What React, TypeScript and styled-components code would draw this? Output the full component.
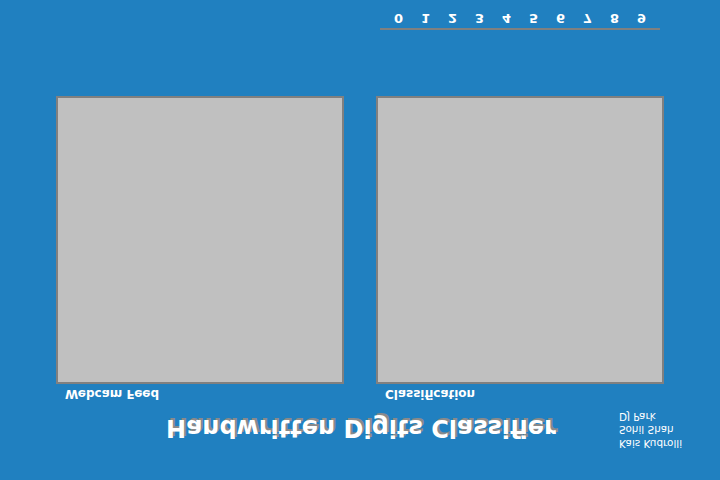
import React from "react";
import styled, { createGlobalStyle } from "styled-components";

const Global = createGlobalStyle`
  html, body { margin: 0; padding: 0; background: #2080c0; }
  body { font-family: "DejaVu Sans", sans-serif; }
`;

const Page = styled.div`
  width: 720px;
  height: 480px;
  background: #2080c0;
  color: #ffffff;
  display: flex;
  flex-direction: column;
  transform: scaleY(-1);
  overflow: hidden;
  font-family: "DejaVu Sans", sans-serif;
`;

const Header = styled.header`
  height: 79px;
  display: grid;
  grid-template-columns: 1fr auto 1fr;
  align-items: start;
`;

const Title = styled.h1`
  grid-column: 2;
  margin: 38px 0 0 2px;
  font-size: 24px;
  line-height: 28px;
  font-weight: bold;
  text-shadow: 2px 2px 0 #8a8a8a;
  white-space: nowrap;
`;

const Authors = styled.div`
  grid-column: 3;
  margin: 30px 0 0 63px;
  font-size: 10.4px;
  line-height: 13.5px;
  display: flex;
  flex-direction: column;
`;

const Panels = styled.div`
  display: flex;
  gap: 32px;
  padding: 0 56px;
`;

const Section = styled.section`
  display: flex;
  flex-direction: column;
`;

const Label = styled.div`
  height: 17px;
  padding-left: 9px;
  font-size: 12px;
  line-height: 14px;
  font-weight: bold;
`;

const Box = styled.div`
  width: 288px;
  height: 288px;
  box-sizing: border-box;
  border: 2px solid #808080;
  background: #c0c0c0;
`;

const DigitBar = styled.div`
  margin: 66px 0 0 380px;
  width: 280px;
  box-sizing: border-box;
  border-top: 2px solid #808080;
  padding: 2px 5px 0;
  display: flex;
`;

const Digit = styled.span`
  width: 27px;
  text-align: center;
  font-size: 13px;
  line-height: 15px;
  font-weight: bold;
`;

export default function App() {
  return (
    <>
      <Global />
      <Page>
        <Header>
          <Title>Handwritten Digits Classifier</Title>
          <Authors>
            <span>Kais Kudrolli</span>
            <span>Sohil Shah</span>
            <span>DJ Park</span>
          </Authors>
        </Header>
        <Panels>
          <Section>
            <Label>Webcam Feed</Label>
            <Box />
          </Section>
          <Section>
            <Label>Classification</Label>
            <Box />
          </Section>
        </Panels>
        <DigitBar>
          {Array.from({ length: 10 }, (_, i) => (
            <Digit key={i}>{i}</Digit>
          ))}
        </DigitBar>
      </Page>
    </>
  );
}
